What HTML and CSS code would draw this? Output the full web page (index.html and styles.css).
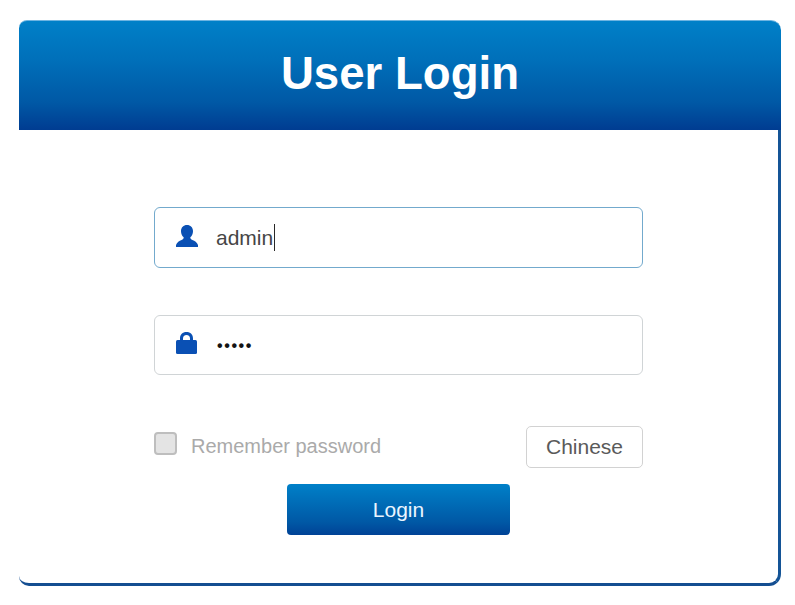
FILE: index.html
```html
<!DOCTYPE html>
<html lang="en">
<head>
	<meta charset="UTF-8">
	<meta name="viewport" content="width=device-width, initial-scale=1.0">
	<title>User Login</title>
	<link rel="stylesheet" href="styles.css">
</head>
<body>
	<div class="login-box">
		<div class="login-head">User Login</div>
		<div class="login-body">
			<div class="login-form">
				<div class="field field-active">
					<svg class="field-icon icon-user" width="22" height="22" viewBox="0 0 22 22">
						<path d="M11 0c3.500 0 6 2.500 6 6.200 0 2.600-1.100 4.800-2.700 6 .1 1.400.7 2.100 2.100 2.700 2.400 1 4.600 2.100 5.600 5.100v2H0v-2c1-3 3.200-4.100 5.600-5.100 1.400-.6 2-1.300 2.100-2.700C6.100 11 5 8.800 5 6.200 5 2.500 7.500 0 11 0z"/>
					</svg>
					<span class="field-text caret">admin</span>
				</div>
				<div class="field">
					<svg class="field-icon icon-lock" width="21" height="22" viewBox="0 0 21 22">
						<path d="M4 9V6.500C4 2.500 6.500 0 10.500 0S17 2.500 17 6.500V9h-3V6.500C14 4.300 12.700 3 10.500 3S7 4.300 7 6.500V9z"/>
						<rect x="0" y="8" width="21" height="14" rx="1.500"/>
					</svg>
					<span class="field-text dots">•••••</span>
				</div>
				<div class="options">
					<div class="remember">
						<span class="check"></span>
						<span>Remember password</span>
					</div>
					<div class="lang-btn">Chinese</div>
				</div>
				<div class="login-btn">Login</div>
			</div>
		</div>
	</div>
</body>
</html>
```
FILE: styles.css
```css
body{
	margin: 0;
	background-color: rgb(255,255,255);
	font-family: "Liberation Sans", Arial, sans-serif;
}
.login-box{
	width: 762px;
	margin: 20px 0 0 19px;
}
.login-head{
	height: 110px;
	box-sizing: border-box;
	border-top: solid 1px rgb(110,180,225);
	border-radius: 8px 10px 0 0;
	background: linear-gradient(to bottom, rgb(0,128,200), rgb(0,112,186) 35%, rgb(0,88,165) 75%, rgb(0,60,145));
	color: rgb(255,255,255);
	font-size: 45.6px;
	font-weight: bold;
	text-align: center;
	line-height: 106px;
}
.login-body{
	height: 456px;
	box-sizing: border-box;
	padding-top: 77px;
	border-right: solid 3px rgb(20,84,150);
	border-bottom: solid 3px rgb(20,78,145);
	border-radius: 0 0 12px 10px;
}
.login-form{
	width: 489px;
	margin: 0 auto;
}
.field{
	display: flex;
	align-items: center;
	height: 60px;
	box-sizing: border-box;
	margin-bottom: 47px;
	padding-left: 21px;
	border: solid 1px rgb(208,212,214);
	border-radius: 6px;
}
.field-active{
	height: 61px;
	border-color: rgb(115,170,205);
}
.field-icon{
	fill: rgb(10,80,180);
}
.icon-user{
	margin-right: 18px;
	margin-bottom: 3px;
}
.icon-lock{
	margin-right: 20px;
	margin-bottom: 4px;
}
.field-text{
	color: rgb(70,70,70);
	font-size: 21px;
}
.caret{
	padding-right: 1px;
	border-right: solid 1px rgb(40,40,40);
	line-height: 27px;
}
.dots{
	padding-top: 1px;
	color: rgb(20,20,20);
	font-size: 16px;
	font-weight: bold;
	letter-spacing: 1.6px;
}
.options{
	display: flex;
	justify-content: space-between;
	height: 42px;
	margin-top: 51px;
}
.remember{
	display: flex;
	align-items: center;
	gap: 14px;
	height: 40px;
	color: rgb(170,170,170);
	font-size: 20px;
}
.check{
	width: 23px;
	height: 23px;
	margin-bottom: 6px;
	box-sizing: border-box;
	background-color: rgb(228,228,228);
	border: solid 2px rgb(190,190,190);
	border-radius: 4px;
}
.lang-btn{
	width: 117px;
	height: 42px;
	box-sizing: border-box;
	border: solid 1px rgb(210,210,210);
	border-radius: 5px;
	color: rgb(90,90,90);
	font-size: 21px;
	text-align: center;
	line-height: 40px;
}
.login-btn{
	width: 223px;
	height: 51px;
	margin: 16px auto 0;
	background: linear-gradient(to bottom, rgb(0,128,200), rgb(0,88,165) 75%, rgb(0,66,150));
	border-radius: 4px;
	color: rgb(235,245,255);
	font-size: 21px;
	text-align: center;
	line-height: 51px;
}
```
